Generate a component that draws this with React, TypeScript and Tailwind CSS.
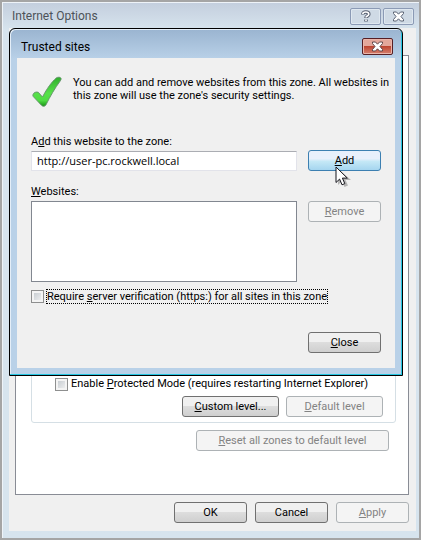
import { useState } from 'react';
import type { ReactNode } from 'react';
import clsx from 'clsx';

type DialogButtonProps = {
    children: ReactNode;
    className?: string;
    disabled?: boolean;
    hot?: boolean;
    onClick?: () => void;
};

function DialogButton({ children, className = 'w-[73px]', disabled, hot, onClick }: DialogButtonProps) {
    return (
        <button
            type="button"
            disabled={disabled}
            onClick={onClick}
            className={clsx(
                'h-[21px] shrink-0 rounded-[3px] border text-center leading-[19px]',
                className,
                disabled && 'border-[#adb2b5] bg-[#f4f4f4] text-[#838383]',
                hot && 'border-[#3c7fb1] bg-linear-to-b from-[#e8f0fc] from-40% via-[#c4e8f6] via-55% to-[#a5d5ef] text-black',
                !disabled && !hot && 'border-[#707070] bg-linear-to-b from-[#f0f0f0] from-45% via-[#dddddd] via-50% to-[#cfcfcf] text-black'
            )}
        >
            {children}
        </button>
    );
}

function CrossIcon({ stroke }: { stroke: string }) {
    return (
        <svg width="13" height="11" viewBox="0 0 13 11" aria-hidden="true">
            <path
                d="M1.5 1h3l2 2.200L8.500 1h3v1.500L9 5.500l2.500 3V10h-3l-2-2.200-2 2.200h-3V8.500L4 5.500l-2.500-3z"
                fill="#fff"
                stroke={stroke}
                strokeLinejoin="round"
            />
        </svg>
    );
}

function HelpIcon() {
    return (
        <svg width="10" height="13" viewBox="0 0 10 13" aria-hidden="true">
            <path d="M1.800 4.500C1.800 2.700 3 2 4.800 2c1.800 0 3 .7 3 2.200 0 1.800-2.800 1.800-2.800 3.700M5 9.400v2" fill="none" stroke="#596273" strokeWidth="3.600" />
            <path d="M1.800 3.900C1.800 2.600 3 2 4.800 2c1.800 0 3 .7 3 2.200 0 1.800-2.800 1.800-2.800 3.200M5 9.600v1.500" fill="none" stroke="#fff" strokeWidth="1.600" />
        </svg>
    );
}

function CheckMark() {
    return (
        <svg className="shrink-0" width="32" height="32" viewBox="0 0 32 32" aria-hidden="true">
            <defs>
                <linearGradient id="tick" x1="0" y1="0" x2="0" y2="1">
                    <stop offset="0" stopColor="#2fae2c" />
                    <stop offset="0.55" stopColor="#58e04a" />
                    <stop offset="0.8" stopColor="#4fdc43" />
                    <stop offset="1" stopColor="#189314" />
                </linearGradient>
            </defs>
            <path
                d="M2 18.500c.8-2 3-3 5.300-2.200L11.500 21C16 12.500 20.500 6 25.500 1.800 27 .9 29.500 1 30 2.300c.3 1-.1 1.600-.8 2.700C24 12 19 20.500 15 28.800c-1 1.800-3.300 2-4.600.4L2.300 20.600c-.5-.7-.6-1.400-.3-2.100z"
                fill="url(#tick)"
                stroke="#62906a"
                strokeWidth="0.9"
            />
        </svg>
    );
}

function Pointer() {
    return (
        <svg width="16" height="22" viewBox="0 0 16 22" aria-hidden="true">
            <path d="M3 3v16l4-4 2.500 6 3.500-1.500L10.500 14H16z" fill="#000" opacity="0.25" />
            <path d="M1 1v15.500l3.600-3.400 2.400 5.700 2.800-1.200-2.400-5.500h4.900z" fill="#fff" stroke="#15151c" />
        </svg>
    );
}

const checkboxClass =
    'size-[13px] shrink-0 appearance-none border border-[#8e8f8f] bg-linear-to-br from-[#bfc5cb] to-[#f6f6f6] shadow-[inset_0_0_0_2px_#f4f4f4] checked:from-[#4b6097]';

function TrustedSitesDialog() {
    const [site, setSite] = useState('http://user-pc.rockwell.local');

    return (
        <div
            role="dialog"
            aria-labelledby="trusted-title"
            className="absolute top-[26px] right-4 left-[7px] rounded-t-[6px] border border-black bg-[#b9d1ea] bg-linear-to-b from-[#9ab4d0] to-[#b9d1e8] to-[30px] px-[7px] pb-[7px] shadow-[inset_-1px_-1px_0_#25c6e2,inset_1px_1px_0_#e4eef8]"
        >
            <div className="flex h-[29px] items-start justify-between pt-[9px] pr-[2px] pl-1">
                <h2 id="trusted-title" className="text-[12px] leading-[18px] text-black">
                    Trusted sites
                </h2>
                <button
                    type="button"
                    aria-label="Close"
                    className="flex h-[17px] w-[31px] items-center justify-center rounded-[2px] border border-[#571f24] bg-linear-to-b from-[#e3a79b] from-45% via-[#bd4531] via-50% to-[#d5806f] shadow-[inset_0_0_0_1px_#eab5aa]"
                >
                    <CrossIcon stroke="#5e474b" />
                </button>
            </div>

            <div className="bg-[#f0f0f0] px-[14px] pt-[18px] pb-[15px]">
                <div className="flex gap-[10px]">
                    <CheckMark />
                    <p className="leading-[13px] whitespace-nowrap">
                        You can add and remove websites from this zone. All websites in
                        <br />
                        this zone will use the zone's security settings.
                    </p>
                </div>

                <label htmlFor="site" className="mt-[26px] block leading-4">
                    A<u>d</u>d this website to the zone:
                </label>
                <div className="flex items-center gap-[11px]">
                    <input
                        id="site"
                        type="text"
                        value={site}
                        onChange={(e) => setSite(e.target.value)}
                        className="h-5 min-w-0 flex-1 border border-[#e2e3ea] border-t-[#abadb3] bg-white px-[5px] font-['Open_Sans','Noto_Sans',sans-serif] font-medium outline-none"
                    />
                    <div className="relative flex">
                        <DialogButton hot>
                            <u>A</u>dd
                        </DialogButton>
                        <div className="pointer-events-none absolute top-4 left-[27px]">
                            <Pointer />
                        </div>
                    </div>
                </div>

                <label htmlFor="websites" className="mt-3 block leading-[18px]">
                    <u>W</u>ebsites:
                </label>
                <div className="flex items-start gap-[11px]">
                    <select
                        id="websites"
                        multiple
                        className="h-[81px] min-w-0 flex-1 appearance-none border border-[#828790] bg-white outline-none"
                    />
                    <DialogButton disabled>
                        <u>R</u>emove
                    </DialogButton>
                </div>

                <label className="mt-[7px] flex items-center gap-[2px]">
                    <input type="checkbox" className={checkboxClass} />
                    <span className="border border-dotted border-black leading-[13px] whitespace-nowrap">
                        Require <u>s</u>erver verification (https:) for all sites in this zone
                    </span>
                </label>

                <div className="mt-7 flex justify-end">
                    <DialogButton>
                        <u>C</u>lose
                    </DialogButton>
                </div>
            </div>
        </div>
    );
}

export default function App() {
    return (
        <main className="relative flex min-h-screen flex-col border-2 border-[#a5a5a5] bg-[#d7e4ee] bg-linear-to-b from-[#c3cedd] to-[#d7e4ee] to-[28px] pr-[3px] pb-[7px] pl-[7px] font-['Roboto','Noto_Sans',sans-serif] text-[11px] text-black shadow-[inset_1px_1px_0_#eef3f8]">
            <div className="flex h-[26px] items-start justify-between pt-[6px] pr-[2px] pl-[3px]">
                <h1 className="text-[12px] leading-4 text-[#4d5359]">Internet Options</h1>
                <div className="flex gap-[2px]">
                    <button
                        type="button"
                        aria-label="Help"
                        className="flex h-[17px] w-[31px] items-center justify-center rounded-[2px] border border-[#8b9ab5] bg-[#cfdae5] shadow-[inset_0_0_0_1px_#dfe8f0]"
                    >
                        <HelpIcon />
                    </button>
                    <button
                        type="button"
                        aria-label="Close Internet Options"
                        className="flex h-[17px] w-[31px] items-center justify-center rounded-[2px] border border-[#8b9ab5] bg-[#cfdae5] shadow-[inset_0_0_0_1px_#dfe8f0]"
                    >
                        <CrossIcon stroke="#596273" />
                    </button>
                </div>
            </div>

            <div className="flex flex-1 flex-col bg-[#f0f0f0] pt-[27px] pr-[7px] pb-2 pl-[6px]">
                {/* Security tab page */}
                <div className="flex flex-1 flex-col border border-[#898c95] bg-white pt-3 pr-[12px] pb-[43px] pl-[15px]">
                    <section className="flex flex-1 flex-col justify-end rounded-[3px] border border-[#d5dfe5] pr-[12px] pb-[5px] pl-[23px]">
                        <label className="flex items-center gap-[3px] leading-[14px] whitespace-nowrap">
                            <input type="checkbox" className={checkboxClass} />
                            <span>
                                Enable <u>P</u>rotected Mode (requires restarting Internet Explorer)
                            </span>
                        </label>
                        <div className="mt-[5px] flex justify-end gap-[7px]">
                            <DialogButton className="w-[97px]">
                                <u>C</u>ustom level...
                            </DialogButton>
                            <DialogButton className="w-[97px]" disabled>
                                <u>D</u>efault level
                            </DialogButton>
                        </div>
                    </section>
                    <div className="mt-[7px] flex justify-end pr-[7px]">
                        <DialogButton className="w-[193px]" disabled>
                            <u>R</u>eset all zones to default level
                        </DialogButton>
                    </div>
                </div>

                <div className="mt-[7px] flex justify-end gap-2">
                    <DialogButton>OK</DialogButton>
                    <DialogButton>Cancel</DialogButton>
                    <DialogButton disabled>
                        <u>A</u>pply
                    </DialogButton>
                </div>
            </div>

            <TrustedSitesDialog />
        </main>
    );
}
